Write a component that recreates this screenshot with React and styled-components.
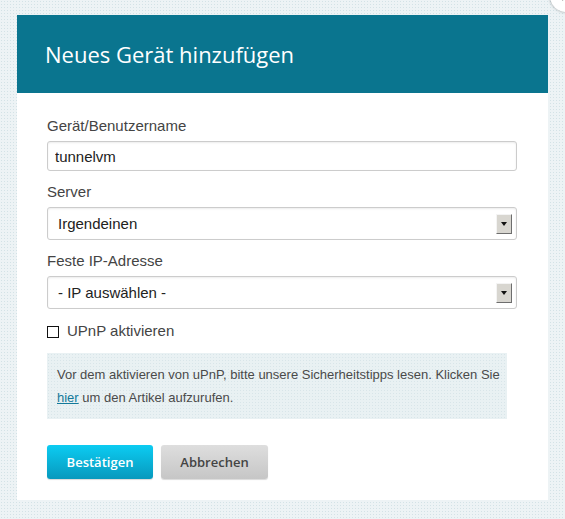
import React from "react";
import styled, { createGlobalStyle } from "styled-components";

const GlobalStyle = createGlobalStyle`
  html, body {
    margin: 0;
    padding: 0;
  }
  body {
    background-color: #edf3f5;
    background-image: radial-gradient(#d3e2e6 0.8px, transparent 0.9px);
    background-size: 3px 3px;
    font-family: "Liberation Sans", Arial, sans-serif;
    min-height: 519px;
    overflow: hidden;
  }
`;

const Page = styled.div`
  padding: 15px 0 0 17px;
`;

const Dialog = styled.div`
  position: relative;
  width: 531px;
  background: #fff;
`;

const CloseButton = styled.div`
  position: absolute;
  top: -35px;
  right: -34px;
  width: 32px;
  height: 32px;
  border-radius: 50%;
  background: #fff;
  box-shadow: 0 0 3px rgba(0, 0, 0, 0.35);
  display: flex;
  align-items: center;
  justify-content: center;
`;

const Header = styled.div`
  background: #0a758f;
  height: 78px;
  display: flex;
  align-items: center;
  padding: 0 28px;
  box-sizing: border-box;
`;

const Title = styled.h2`
  margin: 0;
  color: #fff;
  font-family: "Open Sans", sans-serif;
  font-weight: 400;
  font-size: 22px;
`;

const Body = styled.div`
  padding: 24px 31px 21px 30px;
`;

const Field = styled.div`
  display: flex;
  flex-direction: column;
  margin-bottom: 12px;
`;

const Label = styled.label`
  font-size: 15px;
  line-height: 18px;
  color: #444;
  margin-bottom: 6px;
`;

const TextInput = styled.input`
  box-sizing: border-box;
  height: 30px;
  border: 1px solid #ccc;
  border-radius: 3px;
  box-shadow: inset 0 1px 2px rgba(0, 0, 0, 0.08);
  padding: 0 7px;
  font-family: "Liberation Sans", Arial, sans-serif;
  font-size: 15px;
  color: #222;
  outline: none;
`;

const SelectBox = styled.div`
  box-sizing: border-box;
  height: 33px;
  border: 1px solid #ccc;
  border-radius: 3px;
  box-shadow: inset 0 1px 2px rgba(0, 0, 0, 0.08);
  display: flex;
  align-items: center;
  justify-content: space-between;
  padding: 0 4px 0 10px;
  font-size: 15px;
  color: #222;
`;

const ArrowBox = styled.div`
  box-sizing: border-box;
  width: 16px;
  height: 20px;
  background: #d8d6d0;
  border-top: 1px solid #f4f4f4;
  border-left: 1px solid #f4f4f4;
  border-right: 1px solid #6e6e6e;
  border-bottom: 1px solid #6e6e6e;
  display: flex;
  align-items: center;
  justify-content: center;
`;

const CheckRow = styled.label`
  display: flex;
  align-items: center;
  gap: 8px;
  font-size: 15px;
  color: #444;
  margin-top: 13px;
  line-height: 18px;
`;

const CheckBox = styled.span`
  box-sizing: border-box;
  width: 12px;
  height: 12px;
  border: 1px solid #111;
  background: #fff;
  margin-top: 2px;
`;

const InfoBox = styled.div`
  margin-top: 13px;
  width: 460px;
  box-sizing: border-box;
  padding: 10px 4px 10px 10px;
  background-color: #e9f1f3;
  background-image: radial-gradient(#d8e5e9 0.8px, transparent 0.9px);
  background-size: 3px 3px;
  font-size: 13px;
  line-height: 23px;
  color: #4a4a4a;
`;

const Link = styled.a`
  color: #13799a;
  text-decoration: underline;
`;

const Actions = styled.div`
  display: flex;
  gap: 8px;
  margin-top: 26px;
`;

const Button = styled.button`
  height: 34px;
  border: none;
  border-radius: 3px;
  padding: 0;
  font-family: "Open Sans", sans-serif;
  font-weight: 600;
  font-size: 13px;
  cursor: pointer;
  box-shadow: 0 1px 1px rgba(0, 0, 0, 0.15);
  color: ${(p) => (p.$primary ? "#fff" : "#444")};
  background: ${(p) =>
    p.$primary
      ? "linear-gradient(#0cccf2, #0799bd)"
      : "linear-gradient(#dedede, #c6c6c6)"};
  width: ${(p) => p.$width}px;
`;

function Select({ value }) {
  return (
    <SelectBox>
      <span>{value}</span>
      <ArrowBox>
        <svg width="6" height="4" viewBox="0 0 6 4">
          <path d="M0 0h6L3 4z" fill="#111" />
        </svg>
      </ArrowBox>
    </SelectBox>
  );
}

export default function App() {
  return (
    <Page>
      <GlobalStyle />
      <Dialog>
        <CloseButton>
          <svg width="10" height="10" viewBox="0 0 10 10">
            <path d="M1 1l8 8M9 1l-8 8" stroke="#777" strokeWidth="2" />
          </svg>
        </CloseButton>
        <Header>
          <Title>Neues Gerät hinzufügen</Title>
        </Header>
        <Body>
          <Field>
            <Label>Gerät/Benutzername</Label>
            <TextInput defaultValue="tunnelvm" />
          </Field>
          <Field>
            <Label>Server</Label>
            <Select value="Irgendeinen" />
          </Field>
          <Field>
            <Label>Feste IP-Adresse</Label>
            <Select value="- IP auswählen -" />
          </Field>
          <CheckRow>
            <CheckBox />
            UPnP aktivieren
          </CheckRow>
          <InfoBox>
            Vor dem aktivieren von uPnP, bitte unsere Sicherheitstipps lesen. Klicken Sie{" "}
            <Link href="#">hier</Link> um den Artikel aufzurufen.
          </InfoBox>
          <Actions>
            <Button $primary $width={106}>Bestätigen</Button>
            <Button $width={107}>Abbrechen</Button>
          </Actions>
        </Body>
      </Dialog>
    </Page>
  );
}
